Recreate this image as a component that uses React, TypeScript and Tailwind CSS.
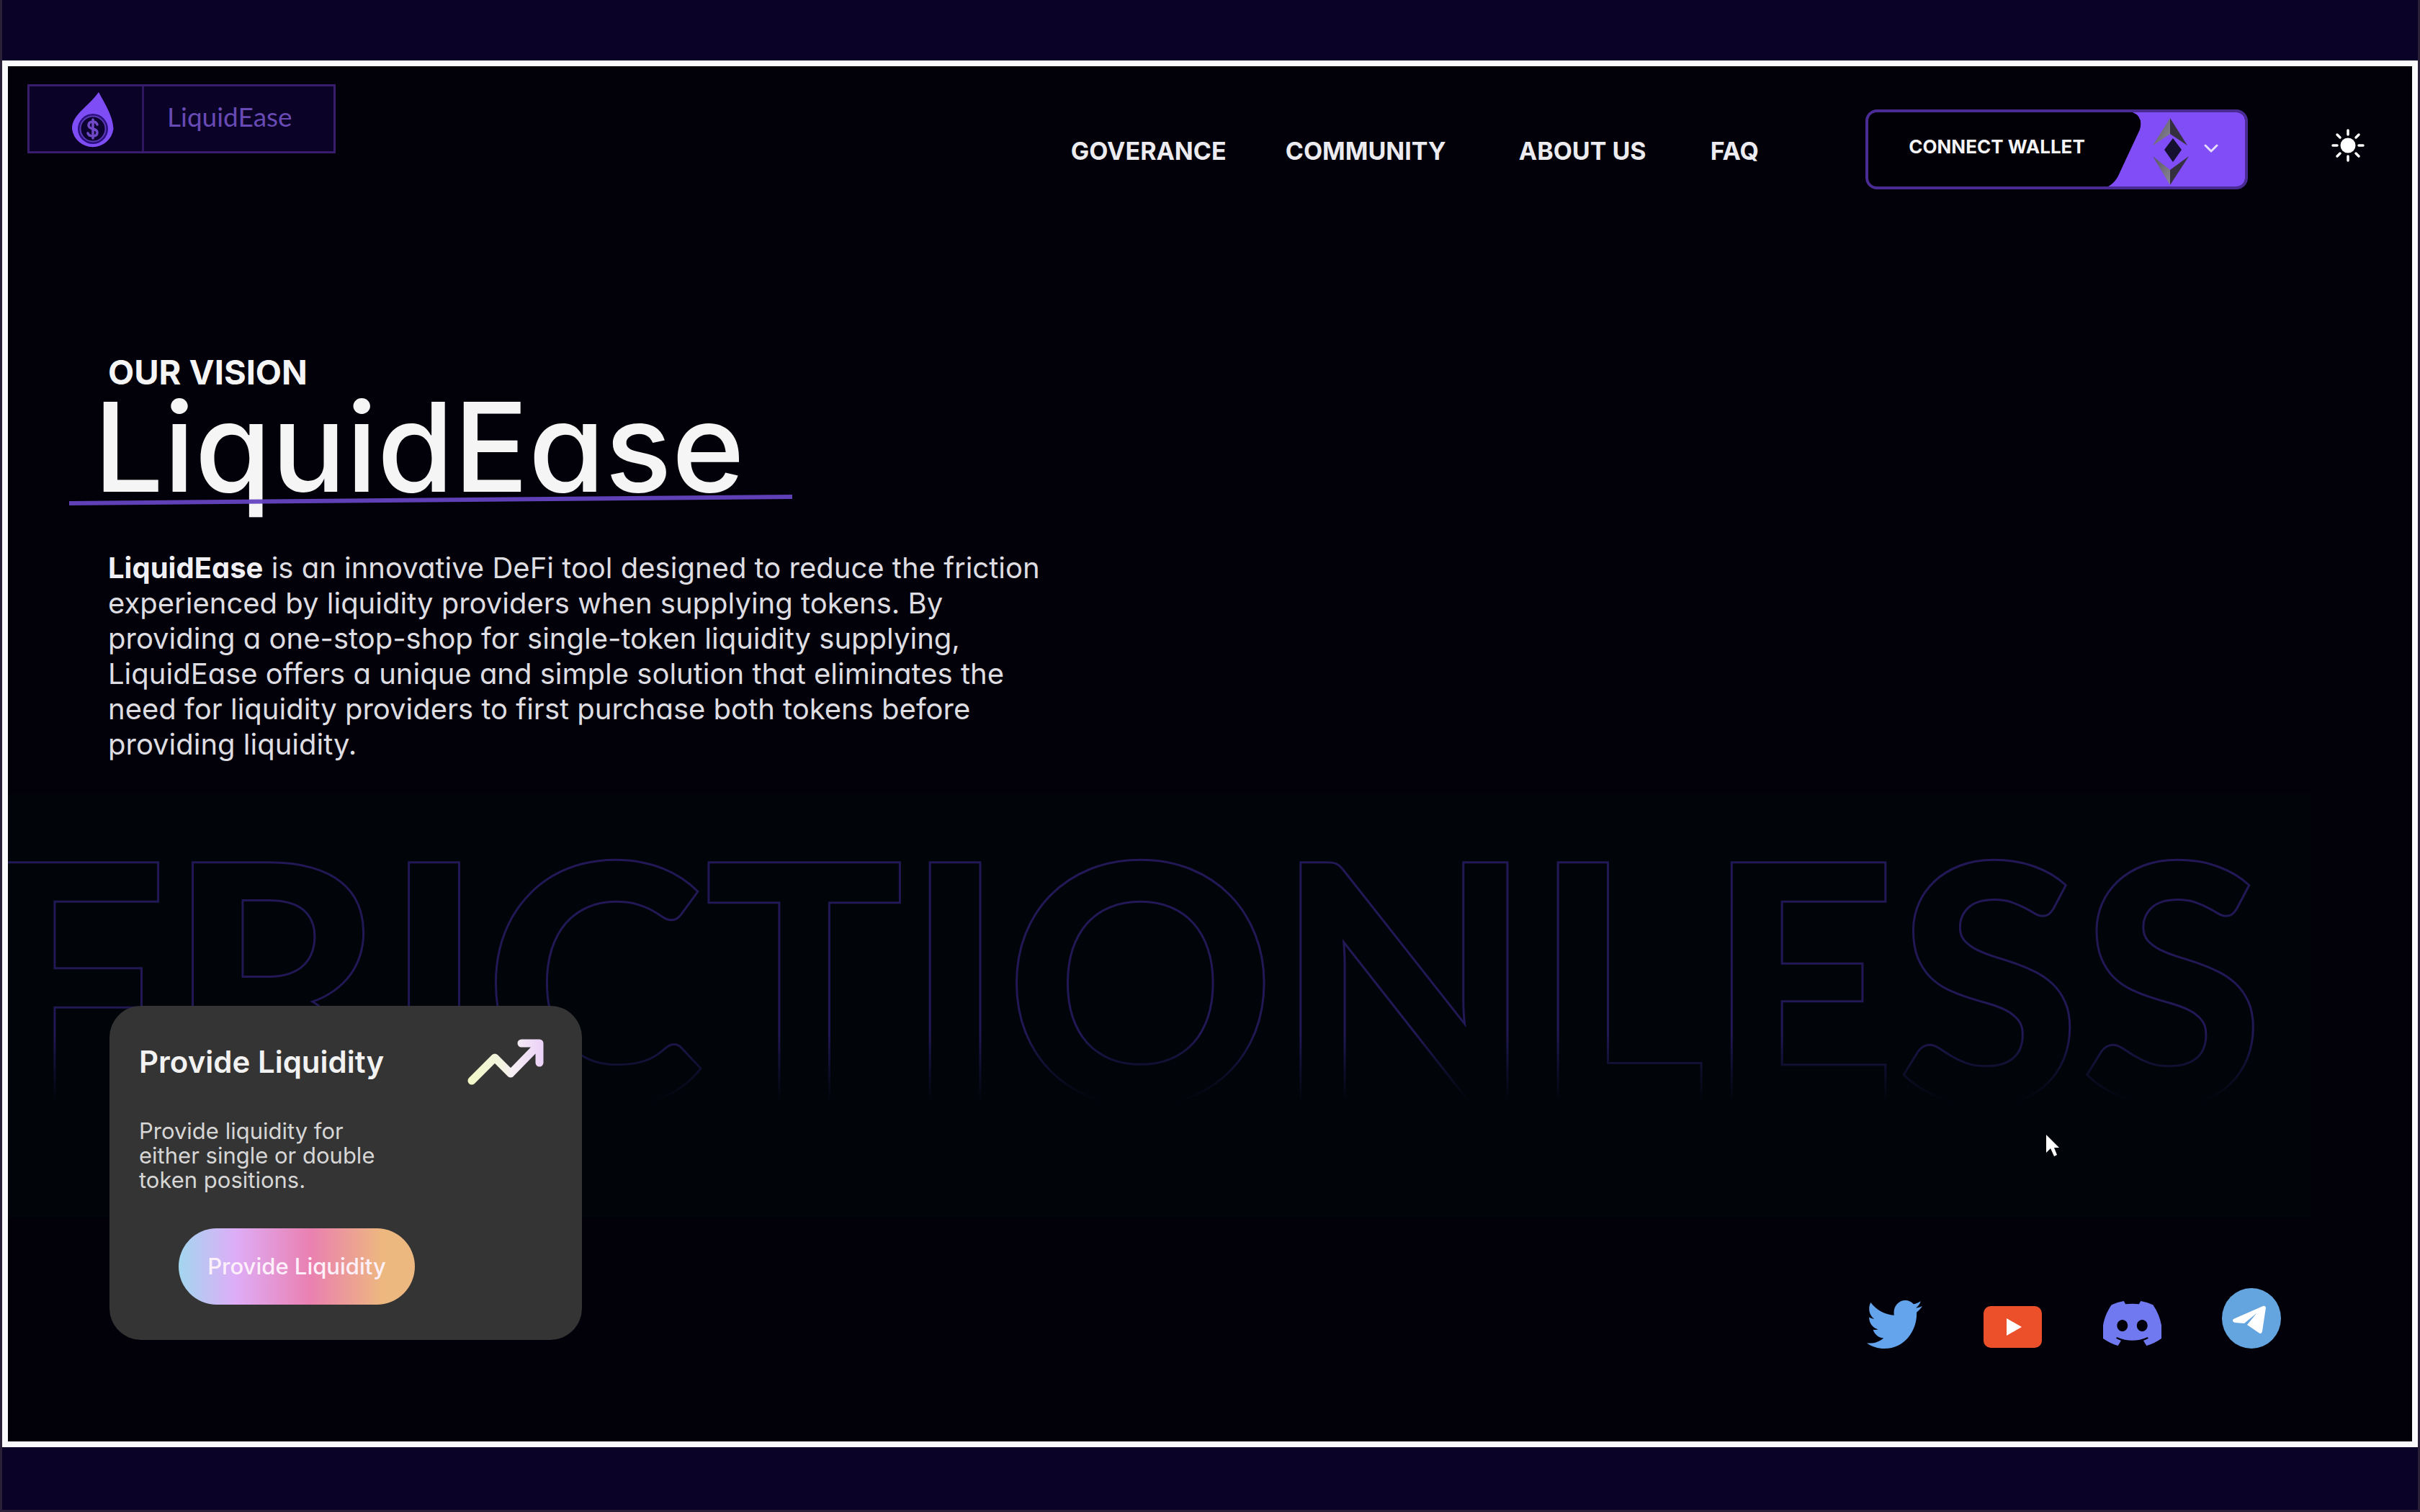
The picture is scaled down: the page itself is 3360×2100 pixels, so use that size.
import { FaDiscord, FaTwitter } from 'react-icons/fa';

const navLinks = ['GOVERANCE', 'COMMUNITY', 'ABOUT US', 'FAQ'];

function Logo() {
  return (
    <a
      href="#home"
      className="mt-[25px] flex h-24 w-[428px] shrink-0 border-[3px] border-[#391c6e] bg-[#0a0227]"
    >
      <span className="flex w-[159px] justify-center border-r-[3px] border-[#2e1660] pt-2 pl-5">
        <svg viewBox="0 0 60 80" className="h-20 w-[60px]" aria-hidden="true">
          <path
            d="M38 0C44 12 58 32 58.500 51A29 29 0 0 1 1 51C1 31 22 22 38 0Z"
            fill="#7f4df5"
          />
          <circle cx="30" cy="51" r="21" fill="#2a1080" />
          <circle cx="30" cy="51" r="17.500" fill="#0d0330" stroke="#5c39b4" strokeWidth="2" />
          <path
            d="M30 38v26M36 45c-1-3-3-4-6-4-4 0-6 2-6 5 0 7 12 3 12 10 0 3-2 5-6 5-3 0-6-1-7-4"
            fill="none"
            stroke="#7048c8"
            strokeWidth="3.500"
            strokeLinecap="round"
          />
        </svg>
      </span>
      <span className="pl-8 font-['Lato',sans-serif] text-[37px] leading-[84px] text-[#684ab4]">
        LiquidEase
      </span>
    </a>
  );
}

function WalletButton() {
  return (
    <button
      type="button"
      className="flex h-[111px] w-[531px] shrink-0 items-stretch overflow-hidden rounded-2xl border-[4px] border-[#4a2b94] bg-[#010006]"
    >
      <span className="flex-1 pb-2 pl-6 text-center text-[26px] leading-[95px] font-bold text-[#f4f4f6]">
        CONNECT WALLET
      </span>
      <svg viewBox="0 0 191 103" className="-mr-px h-full w-[191px]" aria-hidden="true">
        <defs>
          <linearGradient id="eth-left" x1="0" y1="0" x2="1" y2="1">
            <stop offset="0" stopColor="#57545f" />
            <stop offset="1" stopColor="#8b8796" />
          </linearGradient>
        </defs>
        <path d="M34 0Q49 6 44 24L16 84Q11 97 0 103H191V0Z" fill="#804df7" />
        <path d="M86 8L62 46L86 30Z" fill="url(#eth-left)" />
        <path d="M86 8L110 46L86 30Z" fill="#35303f" />
        <path d="M90 36L102 52L90 69L78 52Z" fill="#151030" />
        <path d="M62 61L86 80V101Z" fill="url(#eth-left)" />
        <path d="M112 61L86 80V101Z" fill="#35303f" />
        <path
          d="M135 46l8 8 8-8"
          fill="none"
          stroke="#e6dcff"
          strokeWidth="3"
          strokeLinecap="round"
          strokeLinejoin="round"
        />
      </svg>
    </button>
  );
}

function SunIcon() {
  return (
    <svg viewBox="0 0 46 46" className="size-[46px]" aria-hidden="true">
      <circle cx="23" cy="23" r="10.500" fill="#fff" />
      <path
        d="M23 2v6M23 38v6M2 23h6M38 23h6M8 8l4 4M34 34l4 4M8 38l4-4M34 12l4-4"
        stroke="#fff"
        strokeWidth="3.500"
        strokeLinecap="round"
      />
    </svg>
  );
}

function Header() {
  return (
    <header className="flex items-start justify-between pr-[66px] pl-[27px]">
      <Logo />
      <div className="mt-[60px] flex items-center">
        <nav className="mr-[148px] grid grid-cols-[298px_324px_266px_auto] pt-1 text-[34px] leading-10 font-bold">
          {navLinks.map((label) => (
            <a key={label} href="#nav" className="whitespace-nowrap text-[#ececf0]">
              {label}
            </a>
          ))}
        </nav>
        <WalletButton />
        <button type="button" aria-label="Toggle theme" className="ml-[116px] pb-3">
          <SunIcon />
        </button>
      </div>
    </header>
  );
}

function Hero() {
  return (
    <section className="mt-[226px] pl-[139px]">
      <p className="text-[47px] leading-14 font-bold text-[#f5f5f5]">OUR VISION</p>
      <div className="relative -ml-5">
        <h1 className="text-[172px] leading-[150px] font-[450] text-[#f5f5f5]">LiquidEase</h1>
        <svg
          viewBox="0 0 1008 20"
          className="absolute -bottom-3 -left-9 h-5 w-[1008px]"
          aria-hidden="true"
        >
          <path d="M2 12L1006 3" stroke="#6443c0" strokeWidth="6" fill="none" opacity="0.95" />
        </svg>
      </div>
      <p className="mt-[69px] text-[40px] leading-[49px] text-[#dddde2]">
        <strong className="font-bold text-[#f0f0f4]">LiquidEase</strong> is an innovative DeFi tool
        designed to reduce the friction
        <br />
        experienced by liquidity providers when supplying tokens. By
        <br />
        providing a one-stop-shop for single-token liquidity supplying,
        <br />
        LiquidEase offers a unique and simple solution that eliminates the
        <br />
        need for liquidity providers to first purchase both tokens before
        <br />
        providing liquidity.
      </p>
    </section>
  );
}

function Watermark() {
  return (
    <div
      aria-hidden="true"
      className="mt-[45px] mr-[141px] h-[587px] overflow-hidden bg-[#010509]"
    >
      <p className="-ml-10 font-['Lato',sans-serif] text-[462px] leading-[503px] font-black whitespace-nowrap text-transparent [-webkit-text-stroke:3px_#221856] [mask-image:linear-gradient(to_bottom,black_66%,transparent_85%)]">
        FRICTIONLESS
      </p>
    </div>
  );
}

function LiquidityCard() {
  return (
    <article className="w-[656px] rounded-[44px] bg-[#343434] px-[41px] pt-[46px] pb-[49px]">
      <div className="flex h-16 items-center justify-between">
        <h2 className="text-[42px] leading-[50px] font-semibold text-[#f2f2f2]">
          Provide Liquidity
        </h2>
        <svg viewBox="0 0 106 64" className="mr-3 h-16 w-[106px]" fill="none" aria-hidden="true">
          <defs>
            <linearGradient id="trend" gradientUnits="userSpaceOnUse" x1="4" y1="0" x2="102" y2="0">
              <stop offset="0" stopColor="#f3fac8" />
              <stop offset="0.450" stopColor="#f3f3e0" />
              <stop offset="0.600" stopColor="#f6eef4" />
              <stop offset="1" stopColor="#ecd3f8" />
            </linearGradient>
          </defs>
          <path
            d="M6 58L38 26L60 48L99 8M75 6H100V33"
            stroke="url(#trend)"
            strokeWidth="11"
            strokeLinecap="round"
            strokeLinejoin="round"
          />
        </svg>
      </div>
      <p className="mt-[47px] text-[31px] leading-[34px] text-[#d6d6d6]">
        Provide liquidity for
        <br />
        either single or double
        <br />
        token positions.
      </p>
      <button
        type="button"
        className="mt-[50px] ml-[55px] block h-[106px] w-[328px] rounded-full bg-[linear-gradient(90deg,#a3d6ef_0%,#deadf7_24%,#ea80b0_56%,#edb780_86%)] text-[31px] font-medium text-[#fdf0fa]"
      >
        Provide Liquidity
      </button>
    </article>
  );
}

function Socials() {
  return (
    <div className="mt-[392px] flex h-[84px] items-end gap-[84px]">
      <a href="#twitter" aria-label="Twitter">
        <FaTwitter
          viewBox="0 48 512 416"
          preserveAspectRatio="none"
          className="h-[67px] w-[77px] text-[#63a4ec]"
        />
      </a>
      <a href="#youtube" aria-label="YouTube">
        <svg viewBox="0 0 83 60" className="h-[60px] w-[83px]">
          <rect x="1" y="1" width="81" height="58" rx="10" fill="#ec502b" />
          <path d="M33 18V42L54 30Z" fill="#fff" />
        </svg>
      </a>
      <a href="#discord" aria-label="Discord">
        <FaDiscord
          viewBox="32 32 576 448"
          preserveAspectRatio="none"
          className="mb-1 h-[62px] w-[81px] text-[#7079f0]"
        />
      </a>
      <a href="#telegram" aria-label="Telegram">
        <svg viewBox="0 0 82 84" className="h-[84px] w-[82px]">
          <ellipse cx="41" cy="42" rx="41" ry="42" fill="#64a5e0" />
          <path
            d="M57 25L16 43Q13 46 18 48L31 49L48 35L35 51L51 62Q55 65 56 60L61 27Q60 24 57 25Z"
            fill="#fff"
          />
        </svg>
      </a>
    </div>
  );
}

export default function App() {
  return (
    <div className="flex min-h-screen flex-col border-x-[3px] border-b-[3px] border-[#2a2038] bg-[#0a0227] pt-21 pb-[87px] font-['Inter',sans-serif] [font-feature-settings:'cv11']">
      <div className="relative flex flex-1 flex-col border-8 border-[#fafafc] bg-[#020009]">
        <Header />
        <main>
          <Hero />
          <Watermark />
          <div className="relative -mt-[293px] flex items-start justify-between pr-[182px] pb-10 pl-[141px]">
            <LiquidityCard />
            <Socials />
          </div>
        </main>
        <svg
          viewBox="0 0 20 32"
          className="absolute top-[1483px] left-[2829px] h-8 w-5"
          aria-hidden="true"
        >
          <path d="M1 1V26L7 20L12 31L16 29L12 19H19Z" fill="#fff" />
        </svg>
      </div>
    </div>
  );
}
